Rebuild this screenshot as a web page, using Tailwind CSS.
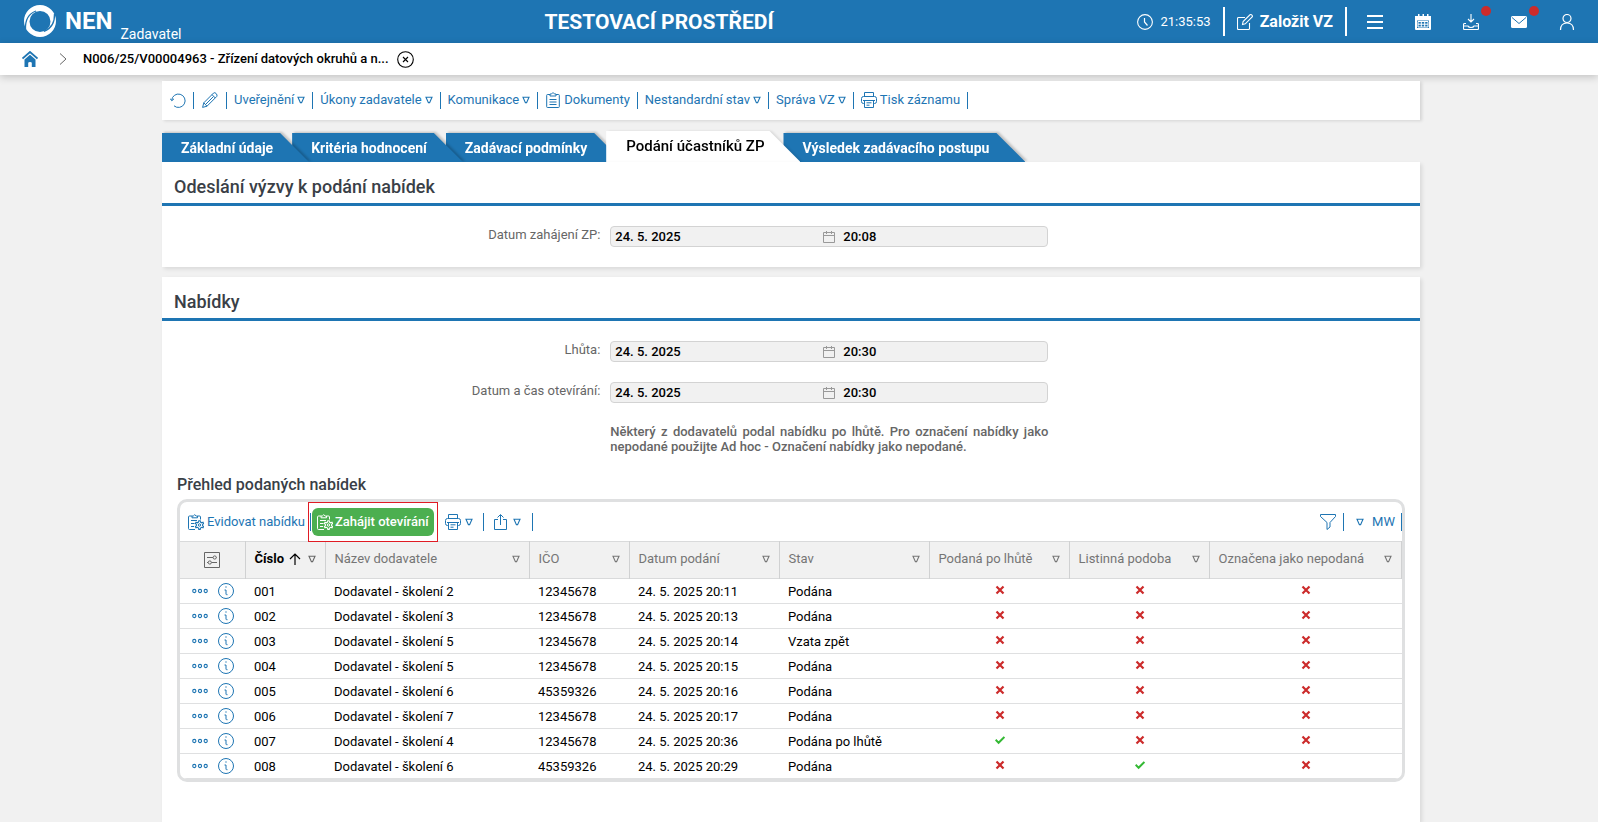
<!DOCTYPE html>
<html lang="cs">
<head>
    <meta charset="UTF-8">
    <meta name="viewport" content="width=device-width, initial-scale=1.0">
    <title>NEN - Podání účastníků ZP</title>
    <script src="https://cdn.jsdelivr.net/npm/@tailwindcss/browser@4"></script>
</head>
<body class="min-h-screen flex flex-col bg-[#f1f1f1] font-['Roboto',sans-serif] text-[13px] leading-4 text-black overflow-x-hidden">

    <!-- Icon sprite -->
    <svg class="hidden">
        <symbol id="tri" viewBox="0 0 8 8"><path d="M1 1.2h6L4.6 6.6H3.4z" fill="none" stroke="currentColor" stroke-width="1.1"/></symbol>
        <symbol id="printer" viewBox="0 0 16 16"><path d="M3.5 4.5v-4h9v4M3.5 11.5h-1a2 2 0 0 1-2-2v-3a2 2 0 0 1 2-2h11a2 2 0 0 1 2 2v3a2 2 0 0 1-2 2h-1M3.5 8.5h9v7h-9zM2 8.5h12M5.5 10.8h5M5.5 13.2h3" fill="none" stroke="currentColor"/></symbol>
        <symbol id="clipgear" viewBox="0 0 16 16"><g fill="none" stroke="currentColor"><path d="M4 2H1.500q-1 0-1 1v11.500q0 1 1 1H7M9.500 2h2q1 0 1 1v2.500M4 3.800V2h1.300q1.400-2.600 2.900 0h1.300v1.800zM3 6.500h6M3 9.500h3.500M3 12.500h3"/><path d="M10.800 6.700h1.400l.3 1.400 1.200.7 1.300-.5.6 1.200-1 .9v1.300l1 .9-.6 1.200-1.300-.5-1.200.7-.3 1.400h-1.400l-.3-1.400-1.200-.7-1.300.5-.6-1.200 1-.9v-1.300l-1-.9.6-1.200 1.300.5 1.200-.7z" stroke-width="1.100"/><circle cx="11.500" cy="11" r="1.200"/></g></symbol>
        <symbol id="cal" viewBox="0 0 12 12"><path d="M.5 1.500h11v10H.5zM.5 4.500h11M3.500 0v3M8.500 0v3" fill="none" stroke="currentColor"/></symbol>
        <symbol id="dots" viewBox="0 0 16 6"><g fill="none" stroke="currentColor" stroke-width="1.100"><circle cx="2.300" cy="3" r="1.600"/><circle cx="8" cy="3" r="1.600"/><circle cx="13.700" cy="3" r="1.600"/></g></symbol>
        <symbol id="info" viewBox="0 0 16 16"><circle cx="8" cy="8" r="7.500" fill="none" stroke="currentColor"/><path d="M7.300 4h1.400M6.500 7h1.500v4.200q0 .7 1.500.5" fill="none" stroke="currentColor"/></symbol>
        <symbol id="cross" viewBox="0 0 10 10"><path d="M1.500 1.500l7 7M8.500 1.500l-7 7" fill="none" stroke="#cc2b2b" stroke-width="2.200"/></symbol>
        <symbol id="check" viewBox="0 0 10 10"><path d="M.6 4.800l3 3L9.400 2" fill="none" stroke="#34b934" stroke-width="2"/></symbol>
    </svg>

    <!-- Header -->
    <header class="h-[43px] flex items-center justify-between bg-[#1e75b3] text-white pl-6 pr-[23px]">
        <div class="flex h-full">
            <svg class="size-8 mt-[5px]" viewBox="0 0 32 32">
                <path fill="#fff" fill-rule="evenodd" d="M16 0a16 16 0 1 1 0 32a16 16 0 1 1 0-32zM16 6a10.500 10.500 0 1 0 0 21a10.500 10.500 0 1 0 0-21z"/>
                <path fill="none" stroke="#1e75b3" stroke-width="1.300" d="M1.500 24Q1 10 12 6M30.500 9Q31 22 20 26.500"/>
            </svg>
            <span class="ml-[9px] mt-[5px] text-2xl leading-8 font-bold">NEN</span>
            <span class="ml-2 mt-[26px] text-sm leading-4">Zadavatel</span>
        </div>
        <h1 class="text-[21px] font-bold">TESTOVACÍ PROSTŘEDÍ</h1>
        <div class="flex items-center">
            <svg class="size-4 mr-2" viewBox="0 0 16 16"><circle cx="8" cy="8" r="7.400" fill="none" stroke="#fff" stroke-width="1.100"/><path d="M7.500 4v4l3 3.500" fill="none" stroke="#fff" stroke-width="1.200"/></svg>
            <span>21:35:53</span>
            <button class="flex items-center gap-[7px] h-[29px] ml-3 px-3 border-x-2 border-white text-base font-bold">
                <svg class="size-4" viewBox="0 0 16 16"><path d="M8 3.500H1.500q-1 0-1 1v10q0 1 1 1h10q1 0 1-1V9M5.500 10.500l.6-3L13 .8q1-.6 1.900.3t.3 1.900L8.300 9.800z" fill="none" stroke="#fff" stroke-width="1.100"/></svg>
                Založit VZ
            </button>
            <nav class="flex items-center gap-8 ml-5">
                <button aria-label="Menu"><svg class="size-4" viewBox="0 0 16 16"><path d="M0 2h16M0 8h16M0 14h16" stroke="#fff" stroke-width="2"/></svg></button>
                <button aria-label="Kalendář"><svg class="size-4" viewBox="0 0 16 16"><path fill="#fff" d="M0 2h3V0h1.500v2h3V0h1.500v2h3V0h1.500v2H16v13q0 1-1 1H1q-1 0-1-1z"/><path d="M2 6.500h12v7.500H2z" fill="#1e75b3"/><path d="M3 7.500h10v5.500H3zM3 10.200h10M6.300 7.500v5.500M9.700 7.500v5.500" fill="none" stroke="#fff"/></svg></button>
                <button aria-label="Stažené" class="relative">
                    <svg class="size-4" viewBox="0 0 16 16"><path d="M8 0v7.500M5 5l3 3 3-3M3 9.500H1.500q-1 0-1 1v4q0 1 1 1h13q1 0 1-1v-4q0-1-1-1H13M.5 12H5q.5 1.500 3 1.500T11 12h4.500" fill="none" stroke="#fff" stroke-width="1.100"/></svg>
                    <span class="absolute -top-2 left-[18px] size-[10px] rounded-full bg-[#cc2b2b]"></span>
                </button>
                <button aria-label="Zprávy" class="relative">
                    <svg class="size-4" viewBox="0 0 16 16"><rect y="2" width="16" height="12" rx="1.500" fill="#fff"/><path d="M1 3.500l7 6 7-6" fill="none" stroke="#1e75b3"/></svg>
                    <span class="absolute -top-2 left-[18px] size-[10px] rounded-full bg-[#cc2b2b]"></span>
                </button>
                <button aria-label="Uživatel"><svg class="size-4" viewBox="0 0 16 16"><circle cx="8" cy="4.500" r="4" fill="none" stroke="#fff" stroke-width="1.200"/><path d="M1.500 16q0-7 6.500-7t6.500 7" fill="none" stroke="#fff" stroke-width="1.200"/></svg></button>
            </nav>
        </div>
    </header>

    <!-- Breadcrumb -->
    <nav class="h-8 flex items-center bg-white pl-[22px] shadow-[0_2px_8px_rgba(0,0,0,0.2)]">
        <a href="#" aria-label="Domů" class="text-[#1e75b3]"><svg class="size-4" viewBox="0 0 16 16"><path fill="currentColor" d="M2.500 8.500L8 3.800l5.500 4.700V16h-3.700v-4q0-1-1.800-1t-1.800 1v4H2.500z"/><path d="M.5 7.500L8 1l7.500 6.500" fill="none" stroke="currentColor" stroke-width="1.800"/></svg></a>
        <svg class="w-2 h-3 ml-[21px]" viewBox="0 0 8 12"><path d="M1 .5L7 6l-6 5.500" fill="none" stroke="#666"/></svg>
        <span class="ml-4 font-medium">N006/25/V00004963 - Zřízení datových okruhů a n...</span>
        <button aria-label="Zavřít" class="ml-2"><svg class="size-[17px]" viewBox="0 0 17 17"><circle cx="8.500" cy="8.500" r="7.800" fill="none" stroke="#000" stroke-width="1.100"/><path d="M6 6l5 5M11 6l-5 5" stroke="#000" stroke-width="1.100"/></svg></button>
    </nav>

    <main class="flex-1 flex flex-col ml-[162px] mr-[178px] mt-[6px]">
        <!-- Record toolbar -->
        <div class="h-[39px] flex items-center pb-px bg-white pl-2 text-[#1e75b3] shadow-[2px_1px_3px_rgba(0,0,0,0.12)]">
            <button aria-label="Obnovit" class="h-[17px] flex items-center pr-[7px] border-r border-[#1e75b3]"><svg class="size-4" viewBox="0 0 16 16"><path d="M1.700 8.500A6.700 6.700 0 1 1 4 13.800M0 6.500l1.800 2.200L4 6.800" fill="none" stroke="currentColor"/></svg></button>
            <button aria-label="Upravit" class="h-[17px] flex items-center px-2 border-r border-[#1e75b3]"><svg class="size-4" viewBox="0 0 16 16"><path d="M.6 15.400l1.200-4.600L11.600 1q1.200-1 2.600.6t.6 2.800L5 14.200zM1.800 10.800L5 14.200M10 2.600L13.300 6M3.500 12.500l8-8" fill="none" stroke="currentColor"/></svg></button>
            <button class="h-[17px] flex items-center gap-[3px] px-[7px] border-r border-[#1e75b3]">Uveřejnění <svg class="size-2"><use href="#tri"/></svg></button>
            <button class="h-[17px] flex items-center gap-[3px] px-[7px] border-r border-[#1e75b3]">Úkony zadavatele <svg class="size-2"><use href="#tri"/></svg></button>
            <button class="h-[17px] flex items-center gap-[3px] px-[7px] border-r border-[#1e75b3]">Komunikace <svg class="size-2"><use href="#tri"/></svg></button>
            <button class="h-[17px] flex items-center gap-[3px] px-[7px] border-r border-[#1e75b3]">
                <svg class="size-4" viewBox="0 0 16 16"><path d="M5 2.500H2.500q-.8 0-.8.800v11.400q0 .8.800.8h11q.8 0 .8-.8V3.300q0-.8-.8-.8H11M5 4V2h1.500Q8-1 9.500 2H11v2zM4.500 7.500h7M4.500 10h7M4.500 12.500h7" fill="none" stroke="currentColor"/></svg>
                Dokumenty
            </button>
            <button class="h-[17px] flex items-center gap-[3px] px-[7px] border-r border-[#1e75b3]">Nestandardní stav <svg class="size-2"><use href="#tri"/></svg></button>
            <button class="h-[17px] flex items-center gap-[3px] px-[7px] border-r border-[#1e75b3]">Správa VZ <svg class="size-2"><use href="#tri"/></svg></button>
            <button class="h-[17px] flex items-center gap-[3px] px-[7px] border-r border-[#1e75b3]"><svg class="size-4"><use href="#printer"/></svg> Tisk záznamu</button>
        </div>

        <!-- Tabs -->
        <ul class="flex items-end mt-[11px] text-sm font-bold text-white">
            <li class="relative z-50 drop-shadow-[2px_-1px_1px_rgba(0,0,0,0.2)]"><button class="h-[29px] pl-[19px] pr-9 bg-[#1e75b3] [clip-path:polygon(0_0,calc(100%-29px)_0,100%_100%,0_100%)]">Základní údaje</button></li>
            <li class="relative z-40 -ml-[17px] drop-shadow-[2px_-1px_1px_rgba(0,0,0,0.2)]"><button class="h-[29px] pl-[19px] pr-9 bg-[#1e75b3] [clip-path:polygon(0_0,calc(100%-29px)_0,100%_100%,0_100%)]">Kritéria hodnocení</button></li>
            <li class="relative z-30 -ml-[17px] drop-shadow-[2px_-1px_1px_rgba(0,0,0,0.2)]"><button class="h-[29px] pl-[19px] pr-9 bg-[#1e75b3] [clip-path:polygon(0_0,calc(100%-29px)_0,100%_100%,0_100%)]">Zadávací podmínky</button></li>
            <li class="relative z-50 -ml-[17px] drop-shadow-[2px_0_1px_rgba(0,0,0,0.1)]"><button class="h-[31px] pl-5 pr-9 bg-white text-black text-[15px] font-medium [clip-path:polygon(0_0,calc(100%-31px)_0,100%_100%,0_100%)]">Podání účastníků ZP</button></li>
            <li class="relative z-20 -ml-[17px] drop-shadow-[2px_-1px_1px_rgba(0,0,0,0.2)]"><button class="h-[29px] pl-[19px] pr-9 bg-[#1e75b3] [clip-path:polygon(0_0,calc(100%-29px)_0,100%_100%,0_100%)]">Výsledek zadávacího postupu</button></li>
        </ul>

        <section class="relative z-50 bg-white pb-5 shadow-[2px_2px_4px_rgba(0,0,0,0.1)]">
            <h2 class="h-11 pl-3 pt-[13px] border-b-3 border-[#1e75b3] text-lg leading-6 font-medium text-[#3a3f47]">Odeslání výzvy k podání nabídek</h2>
            <div class="flex gap-2 mt-5">
                <label for="zahajeni" class="w-[35%] pr-0.5 pt-px text-right text-[#666]">Datum zahájení ZP:</label>
                <div class="w-[438px] h-[21px] flex items-center border border-[#d3d3d3] rounded-sm bg-[#f1f1f1] font-medium">
                    <input id="zahajeni" value="24. 5. 2025" readonly class="w-[212px] pl-1 outline-none">
                    <svg class="size-3 text-[#999]"><use href="#cal"/></svg>
                    <input aria-label="Čas zahájení" value="20:08" readonly class="flex-1 min-w-0 pl-2 outline-none">
                </div>
            </div>
        </section>

        <section class="flex-1 mt-[10px] bg-white pb-9 shadow-[2px_2px_4px_rgba(0,0,0,0.1)]">
            <h2 class="h-11 pl-3 pt-[13px] border-b-3 border-[#1e75b3] text-lg leading-6 font-medium text-[#3a3f47]">Nabídky</h2>
            <div class="flex gap-2 mt-5">
                <label for="lhuta" class="w-[35%] pr-0.5 pt-px text-right text-[#666]">Lhůta:</label>
                <div class="w-[438px] h-[21px] flex items-center border border-[#d3d3d3] rounded-sm bg-[#f1f1f1] font-medium">
                    <input id="lhuta" value="24. 5. 2025" readonly class="w-[212px] pl-1 outline-none">
                    <svg class="size-3 text-[#999]"><use href="#cal"/></svg>
                    <input aria-label="Čas lhůty" value="20:30" readonly class="flex-1 min-w-0 pl-2 outline-none">
                </div>
            </div>
            <div class="flex gap-2 mt-5">
                <label for="otevirani" class="w-[35%] pr-0.5 pt-px text-right text-[#666]">Datum a čas otevírání:</label>
                <div class="w-[438px] h-[21px] flex items-center border border-[#d3d3d3] rounded-sm bg-[#f1f1f1] font-medium">
                    <input id="otevirani" value="24. 5. 2025" readonly class="w-[212px] pl-1 outline-none">
                    <svg class="size-3 text-[#999]"><use href="#cal"/></svg>
                    <input aria-label="Čas otevírání" value="20:30" readonly class="flex-1 min-w-0 pl-2 outline-none">
                </div>
            </div>
            <div class="flex gap-2 mt-[21px]">
                <span class="w-[35%]"></span>
                <p class="w-[438px] leading-[15px] text-justify font-medium text-[#666]">Některý z dodavatelů podal nabídku po lhůtě. Pro označení nabídky jako nepodané použijte Ad hoc - Označení nabídky jako nepodané.</p>
            </div>

            <h3 class="ml-[15px] mt-[21px] text-base leading-5 font-medium text-[#3a3f47]">Přehled podaných nabídek</h3>

            <!-- Grid -->
            <div class="mx-[15px] mt-1 border-3 border-[#dfe0e1] rounded-[10px] overflow-hidden">
                <div class="h-[39px] flex items-center pl-2 text-[#1e75b3]">
                    <button class="h-[18px] flex items-center gap-[3px] pr-[5px] border-r border-[#1e75b3]"><svg class="size-4"><use href="#clipgear"/></svg> Evidovat nabídku</button>
                    <div class="-ml-[3px] px-[3px] py-[5px] border border-[#e01b24]">
                        <button class="h-7 flex items-center gap-[2px] px-[5px] rounded-md bg-[#4caf50] text-white font-medium"><svg class="size-4"><use href="#clipgear"/></svg> Zahájit otevírání</button>
                    </div>
                    <button aria-label="Tisk" class="h-[18px] flex items-center gap-1 pl-[7px] pr-[10px] border-r border-[#1e75b3]"><svg class="size-4"><use href="#printer"/></svg><svg class="size-2"><use href="#tri"/></svg></button>
                    <button aria-label="Export" class="h-[18px] flex items-center gap-1 pl-[9px] pr-[11px] border-r border-[#1e75b3]"><svg class="size-4" viewBox="0 0 16 16"><path d="M5 5.500H1.500v10h12v-10H10M7.500 11V1M4.500 3.500l3-3 3 3" fill="none" stroke="currentColor"/></svg><svg class="size-2"><use href="#tri"/></svg></button>
                    <button aria-label="Filtr" class="h-[18px] flex items-center pr-[7px] ml-auto border-r border-[#1e75b3]"><svg class="size-4" viewBox="0 0 16 16"><path d="M.5.500h15v2L10 8.500v4.500l-3 2.500v-7L.5 2.500z" fill="none" stroke="currentColor"/></svg></button>
                    <button class="h-[18px] flex items-center gap-2 pl-3 pr-[6px] border-r border-[#1e75b3]"><svg class="size-2"><use href="#tri"/></svg> MW</button>
                </div>
                <table class="w-full table-fixed border-collapse">
                    <colgroup>
                        <col class="w-[65px]"><col class="w-20"><col class="w-[204px]"><col class="w-[100px]"><col class="w-[150px]"><col class="w-[150px]"><col class="w-[140px]"><col class="w-[140px]"><col>
                    </colgroup>
                    <thead class="bg-[#f1f1f1] text-[#757575]">
                        <tr class="h-[37px] border-y border-[#d9dadb]">
                            <th class="border-r border-[#d0d1d2]"><button aria-label="Nastavení sloupců" class="block mx-auto"><svg class="size-4" viewBox="0 0 16 16"><path d="M.5.500h15v15H.5zM3 5.500h6M12.500 5.500H13M3 10.500h1M7.500 10.500H13" fill="none" stroke="#666"/><circle cx="10.700" cy="5.500" r="1.600" fill="none" stroke="#666"/><circle cx="5.800" cy="10.500" r="1.600" fill="none" stroke="#666"/></svg></button></th>
                            <th class="px-[9px] border-r border-[#d0d1d2]"><div class="flex items-center pb-0.5 text-black font-bold">Číslo <svg class="w-3 h-3 ml-[5px]" viewBox="0 0 12 12"><path d="M6 12V1M1 6l5-5 5 5" fill="none" stroke="#000" stroke-width="1.200"/></svg><svg class="size-2 ml-auto text-[#666]"><use href="#tri"/></svg></div></th>
                            <th class="px-[9px] border-r border-[#d0d1d2] font-normal"><div class="flex items-center justify-between pb-0.5">Název dodavatele <svg class="size-2"><use href="#tri"/></svg></div></th>
                            <th class="px-[9px] border-r border-[#d0d1d2] font-normal"><div class="flex items-center justify-between pb-0.5">IČO <svg class="size-2"><use href="#tri"/></svg></div></th>
                            <th class="px-[9px] border-r border-[#d0d1d2] font-normal"><div class="flex items-center justify-between pb-0.5">Datum podání <svg class="size-2"><use href="#tri"/></svg></div></th>
                            <th class="px-[9px] border-r border-[#d0d1d2] font-normal"><div class="flex items-center justify-between pb-0.5">Stav <svg class="size-2"><use href="#tri"/></svg></div></th>
                            <th class="px-[9px] border-r border-[#d0d1d2] font-normal"><div class="flex items-center justify-between pb-0.5">Podaná po lhůtě <svg class="size-2"><use href="#tri"/></svg></div></th>
                            <th class="px-[9px] border-r border-[#d0d1d2] font-normal"><div class="flex items-center justify-between pb-0.5">Listinná podoba <svg class="size-2"><use href="#tri"/></svg></div></th>
                            <th class="px-[9px] border-r border-[#d0d1d2] font-normal"><div class="flex items-center justify-between pb-0.5">Označena jako nepodaná <svg class="size-2"><use href="#tri"/></svg></div></th>
                        </tr>
                    </thead>
                    <tbody id="offers"></tbody>
                </table>
            </div>
        </section>
    </main>

    <script>
        // number, supplier, IČO, submitted, state, late, paper form, marked as not submitted
        const offers = [
            ["001", "Dodavatel - školení 2", "12345678", "24. 5. 2025 20:11", "Podána", false, false, false],
            ["002", "Dodavatel - školení 3", "12345678", "24. 5. 2025 20:13", "Podána", false, false, false],
            ["003", "Dodavatel - školení 5", "12345678", "24. 5. 2025 20:14", "Vzata zpět", false, false, false],
            ["004", "Dodavatel - školení 5", "12345678", "24. 5. 2025 20:15", "Podána", false, false, false],
            ["005", "Dodavatel - školení 6", "45359326", "24. 5. 2025 20:16", "Podána", false, false, false],
            ["006", "Dodavatel - školení 7", "12345678", "24. 5. 2025 20:17", "Podána", false, false, false],
            ["007", "Dodavatel - školení 4", "12345678", "24. 5. 2025 20:36", "Podána po lhůtě", true, false, false],
            ["008", "Dodavatel - školení 6", "45359326", "24. 5. 2025 20:29", "Podána", false, true, false]
        ];

        function cell(value) {
            if (typeof value === "boolean") {
                return `<td class="pl-0.5 pb-[3px]"><svg class="size-[10px] mx-auto"><use href="${value ? "#check" : "#cross"}"/></svg></td>`;
            }
            return `<td class="px-[9px] pt-px">${value}</td>`;
        }

        document.getElementById("offers").innerHTML = offers.map(row => `
            <tr class="h-[25px] border-b border-[#dfe0e1]">
                <td>
                    <div class="flex items-center pl-3 text-[#1e75b3]">
                        <button aria-label="Akce"><svg class="w-4 h-[6px]"><use href="#dots"/></svg></button>
                        <button aria-label="Detail" class="ml-[10px]"><svg class="size-4"><use href="#info"/></svg></button>
                    </div>
                </td>
                ${row.map(cell).join("")}
            </tr>`).join("");
    </script>
</body>
</html>
